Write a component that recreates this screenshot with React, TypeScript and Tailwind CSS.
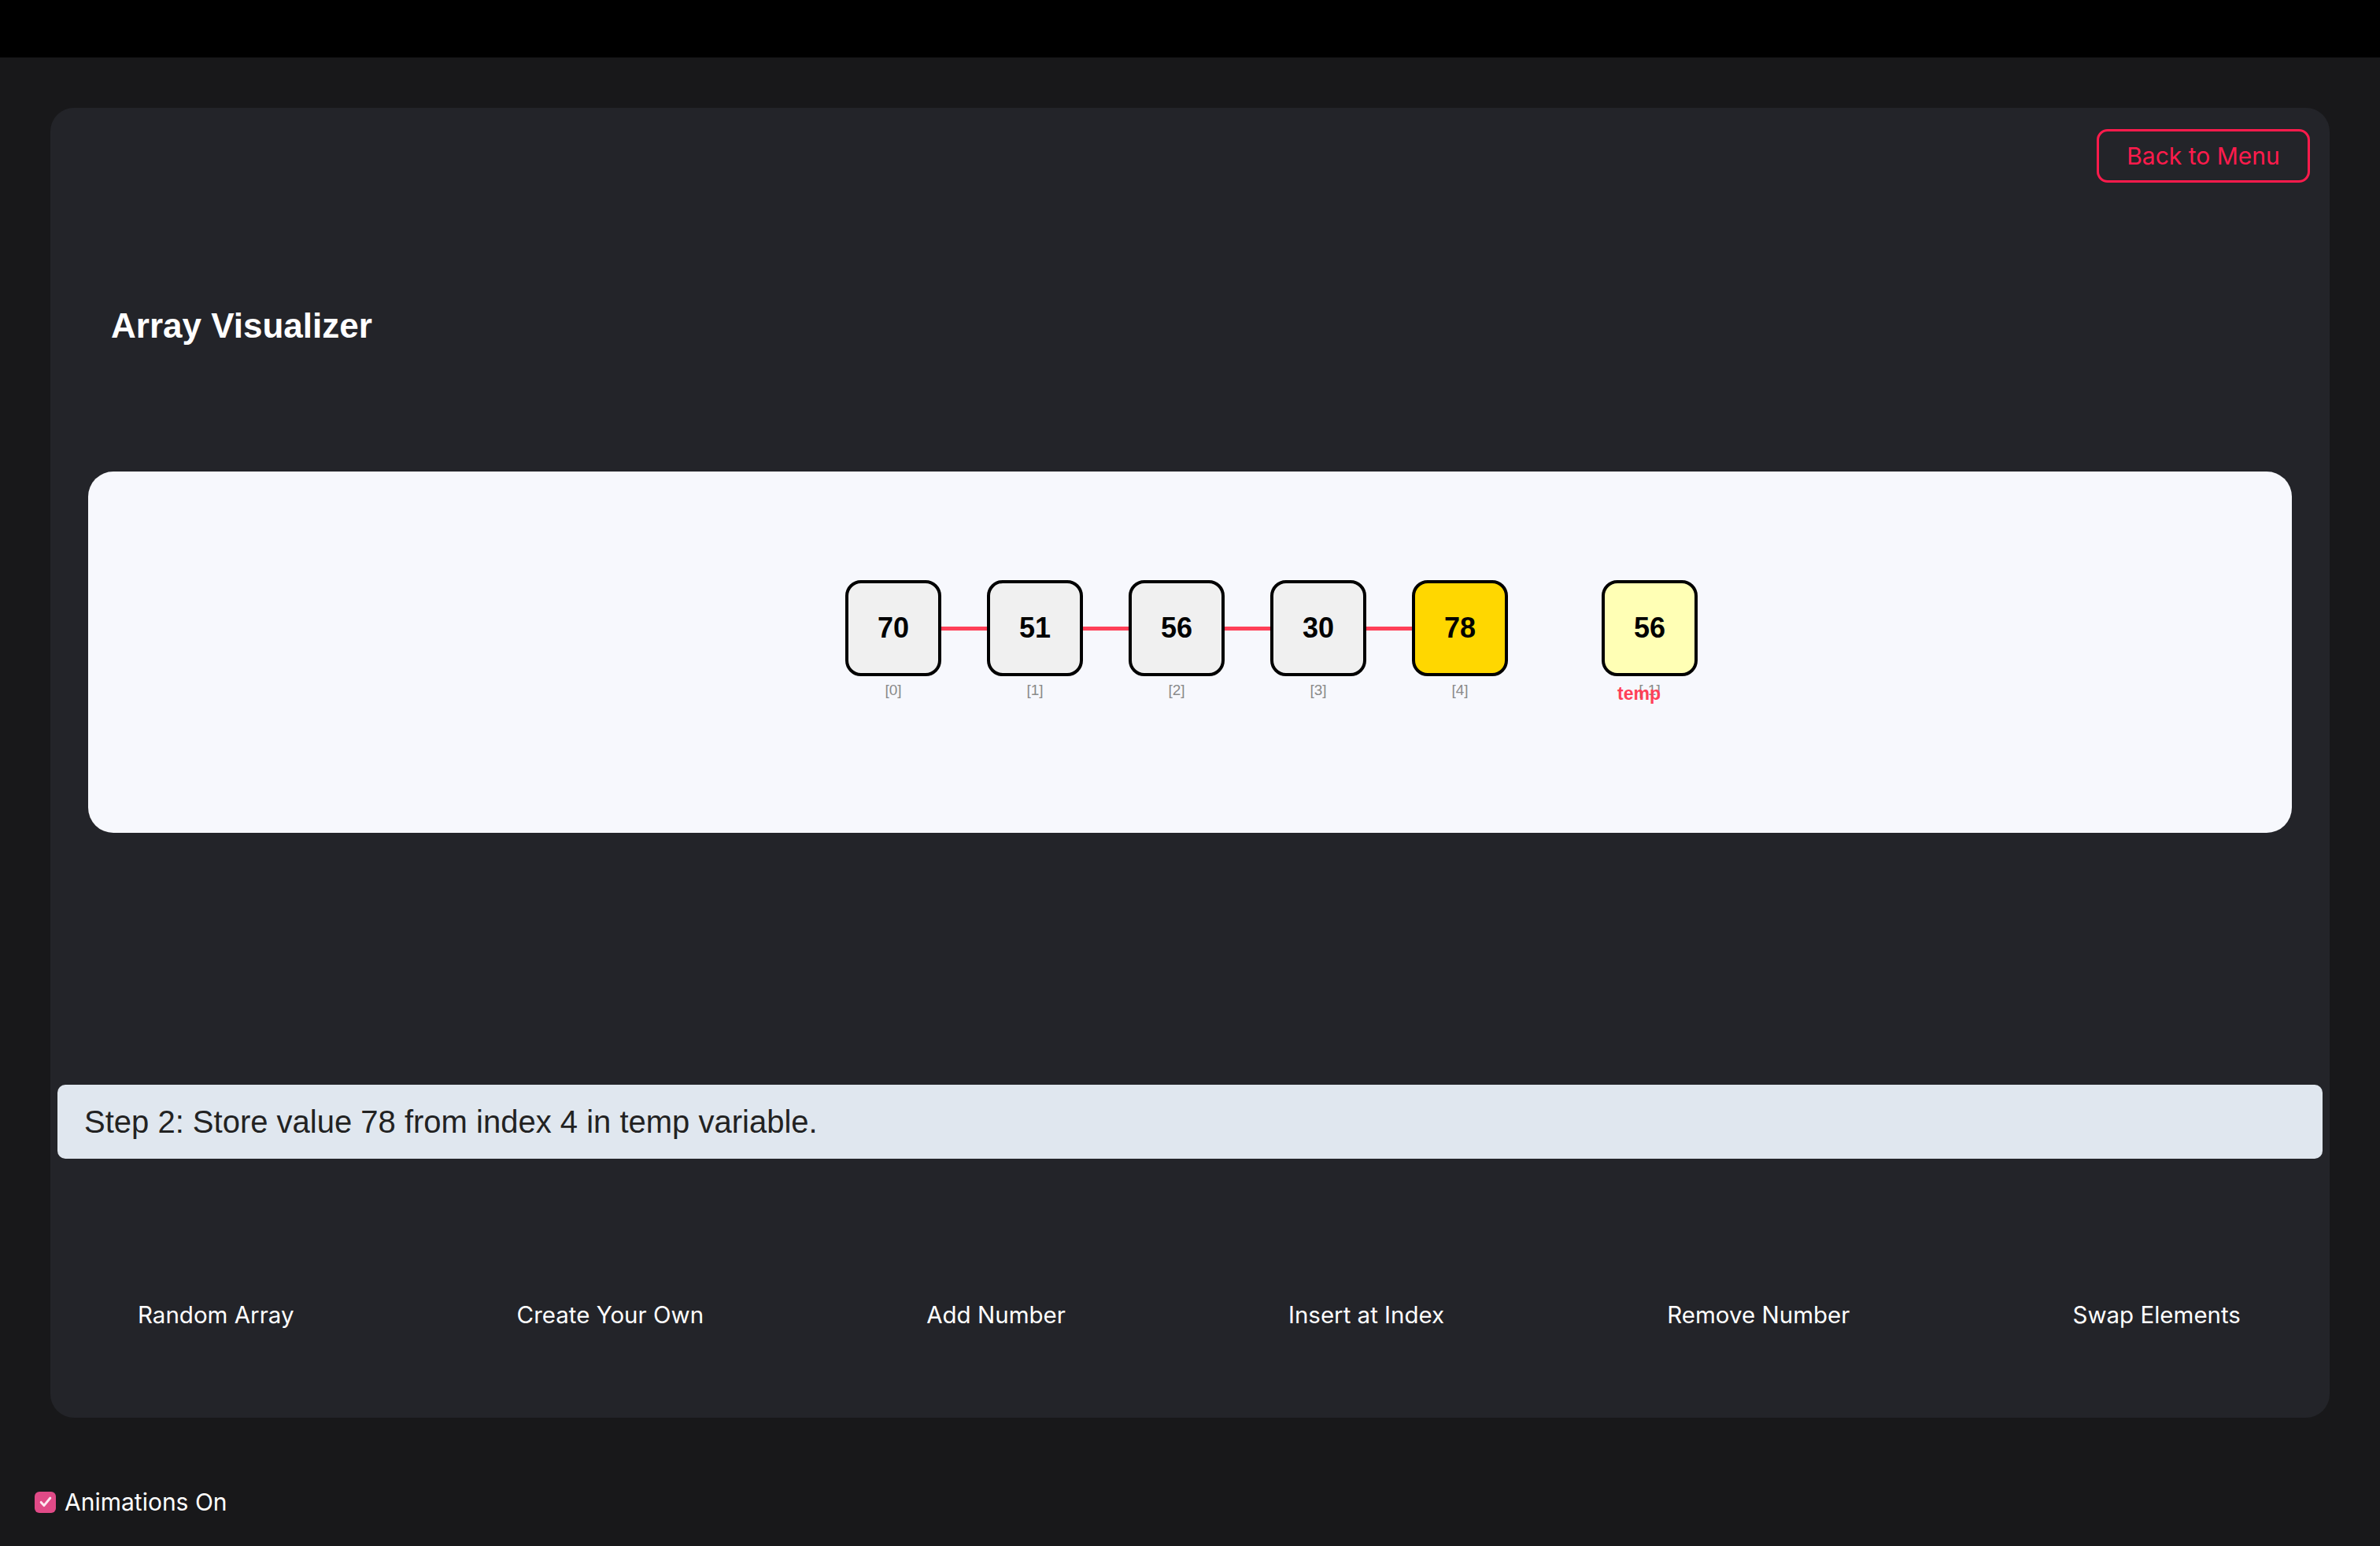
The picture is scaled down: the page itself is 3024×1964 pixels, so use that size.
import React from "react";

const values = [70, 51, 56, 30, 78];
const actions = [
  "Random Array",
  "Create Your Own",
  "Add Number",
  "Insert at Index",
  "Remove Number",
  "Swap Elements",
];

const Cell = ({ value, highlight }: { value: number; highlight?: string }) => (
  <div
    className={`w-[122px] h-[122px] rounded-[20px] border-[4px] border-black flex items-center justify-center text-[36px] font-bold text-black font-['Liberation_Sans',Arial,sans-serif] ${
      highlight ?? "bg-[#f0f0f0]"
    }`}
  >
    {value}
  </div>
);

const IndexLabel = ({ text }: { text: string }) => (
  <div className="mt-[7px] text-[19px] leading-[22px] text-[#8a8a8a] font-['Liberation_Sans',Arial,sans-serif]">
    {text}
  </div>
);

export default function App() {
  return (
    <div className="min-h-screen bg-[#18181a] font-['Inter',sans-serif] text-white">
      <div className="h-[73px] bg-black" />

      <div className="px-[64px] pt-[64px]">
        <div className="rounded-[30px] bg-[#232429] pb-[113px]">
          {/* header */}
          <div className="flex justify-end pt-[27px] pr-[25px]">
            <button className="w-[271px] h-[68px] rounded-[14px] border-[3px] border-[#ff1b4c] text-[#ff1b4c] text-[30px] leading-none">
              Back to Menu
            </button>
          </div>

          <h1 className="mt-[160px] ml-[77px] text-[44px] leading-none font-bold font-['Liberation_Sans',Arial,sans-serif]">
            Array Visualizer
          </h1>

          {/* visual panel */}
          <div className="mx-[48px] mt-[163px] h-[459px] rounded-[32px] bg-[#f7f8fd] pt-[138px] flex justify-center pr-[34px]">
            <div className="relative flex items-start h-fit">
              {values.map((v, i) => (
                <React.Fragment key={i}>
                  {i > 0 && <div className="w-[58px] h-[5px] bg-[#ff4058] mt-[59px]" />}
                  <div className="flex flex-col items-center">
                    <Cell value={v} highlight={i === 4 ? "bg-[#ffd700]" : undefined} />
                    <IndexLabel text={`[${i}]`} />
                  </div>
                </React.Fragment>
              ))}

              {/* temp variable */}
              <div className="absolute top-0 left-[calc(100%+119px)] flex flex-col items-center">
                <Cell value={56} highlight="bg-[#ffffb5]" />
                <IndexLabel text="[-1]" />
                <div className="absolute top-[133px] left-[20px] text-[23px] leading-none font-bold text-[#ff4058] font-['Liberation_Sans',Arial,sans-serif]">
                  temp
                </div>
              </div>
            </div>
          </div>

          {/* step message */}
          <div className="mx-[9px] mt-[320px] h-[94px] rounded-[10px] bg-[#e0e7ef] flex items-center pl-[34px] text-[40px] text-[#222] font-['Liberation_Sans',Arial,sans-serif]">
            Step 2: Store value 78 from index 4 in temp variable.
          </div>

          {/* actions */}
          <div className="mt-[180px] ml-[111px] mr-[113px] flex justify-between">
            {actions.map((a) => (
              <button key={a} className="text-[29.5px] leading-[36px] text-white bg-transparent">
                {a}
              </button>
            ))}
          </div>
        </div>
      </div>

      <label className="mt-[89px] ml-[44px] flex items-center h-[36px] gap-[11px]">
        <span className="w-[27px] h-[27px] rounded-[6px] bg-[#e04a87] flex items-center justify-center">
          <svg viewBox="0 0 24 24" className="w-[20px] h-[20px]" fill="none" stroke="#fde7f0" strokeWidth="3.5" strokeLinecap="round" strokeLinejoin="round">
            <path d="M5 12.5l4.5 5L19 6" />
          </svg>
        </span>
        <span className="text-[30px] leading-[36px]">Animations On</span>
      </label>
    </div>
  );
}
